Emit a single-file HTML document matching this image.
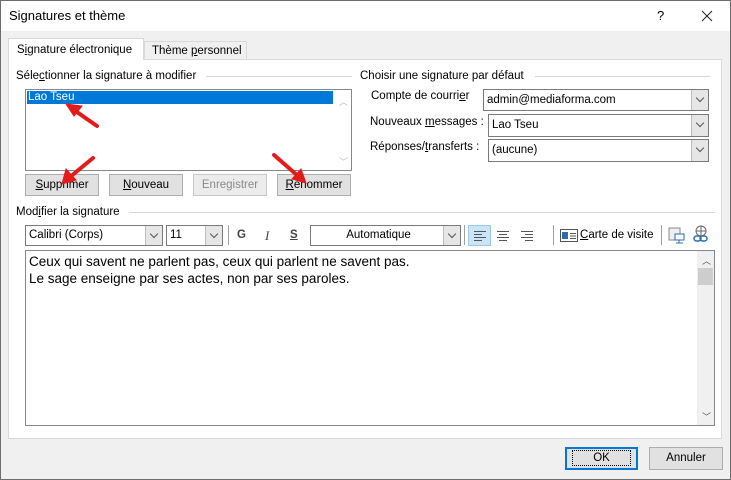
<!DOCTYPE html>
<html><head><meta charset="utf-8"><style>
*{box-sizing:border-box;margin:0;padding:0}
body{width:731px;height:480px;overflow:hidden;font-family:"Liberation Sans",sans-serif;font-size:11.5px;line-height:15px;color:#000;background:#f0f0f0;position:relative}
.a{position:absolute}
.win{left:0;top:0;width:731px;height:480px;border:1px solid #6d6d6d;background:#f0f0f0}
.title{left:1px;top:1px;width:729px;height:30px;background:#fff}
.panel{left:8px;top:59px;width:714px;height:380px;background:#fff;border:1px solid #d9d9d9}
.btn{background:#e1e1e1;border:1px solid #adadad;text-align:center;line-height:20px}
.combo{background:#fff;border:1px solid #7a7a7a;padding-left:3px;line-height:19px}
.dd{position:absolute;right:0;top:0;width:17px;height:100%;background:#e6e6e6;border-left:1px solid #bdbdbd}
.dd:after{content:"";position:absolute;left:5px;top:5px;width:5px;height:5px;border-right:1px solid #555;border-bottom:1px solid #555;transform:rotate(45deg)}
.sep{background:#d6d6d6;height:1px}
.vs{width:1px;background:#a0a0a0;height:20px}
u{text-decoration:underline}
</style></head><body>
<div class="a win"></div>
<div class="a title"></div>
<div class="a" style="left:9px;top:8px;font-size:13px">Signatures et thème</div>
<div class="a" style="left:657px;top:8px;font-size:13px">?</div>
<svg class="a" style="left:701px;top:10px" width="12" height="12"><path d="M1 1L11 11M11 1L1 11" stroke="#222" stroke-width="1"/></svg>
<div class="a panel"></div>
<div class="a" style="left:8px;top:38px;width:136px;height:22px;background:#fff;border:1px solid #d9d9d9;border-bottom:none;padding:4px 0 0 8px">S<u>i</u>gnature électronique</div>
<div class="a" style="left:144px;top:41px;width:103px;height:18px;background:#f0f0f0;border:1px solid #d9d9d9;border-bottom:none;padding:2px 0 0 7px">Thème <u>p</u>ersonnel</div>

<div class="a" style="left:16px;top:69px">Séle<u>c</u>tionner la signature à modifier</div>
<div class="a sep" style="left:206px;top:76px;width:146px"></div>
<div class="a" style="left:25px;top:89px;width:327px;height:82px;border:1px solid #828790;background:#fff"></div>
<div class="a" style="left:27px;top:91px;width:306px;height:13px;background:#0078d7;color:#fff;line-height:13px;padding-left:1px">Lao Tseu</div>
<div class="a" style="left:339px;top:95px;color:#bbb;font-size:9px">︿</div>
<div class="a" style="left:339px;top:155px;color:#bbb;font-size:9px">﹀</div>
<div class="a btn" style="left:25px;top:174px;width:74px;height:22px"><u>S</u>upprimer</div>
<div class="a btn" style="left:109px;top:174px;width:74px;height:22px"><u>N</u>ouveau</div>
<div class="a btn" style="left:193px;top:174px;width:74px;height:22px;color:#8a8a8a;background:#ececec;border-color:#c8c8c8">Enregistrer</div>
<div class="a btn" style="left:277px;top:174px;width:74px;height:22px"><u>R</u>enommer</div>

<div class="a" style="left:360px;top:69px">Choisir une signature par défaut</div>
<div class="a sep" style="left:535px;top:76px;width:175px"></div>
<div class="a" style="left:371px;top:89px">Compte de courri<u>e</u>r</div>
<div class="a combo" style="left:483px;top:89px;width:226px;height:22px;line-height:20px">admin@mediaforma.com<span class="dd"></span></div>
<div class="a" style="left:370px;top:115px">Nouveaux <u>m</u>essages :</div>
<div class="a combo" style="left:488px;top:114px;width:221px;height:23px;line-height:21px">Lao Tseu<span class="dd"></span></div>
<div class="a" style="left:370px;top:140px">Réponses/<u>t</u>ransferts :</div>
<div class="a combo" style="left:488px;top:139px;width:221px;height:23px;line-height:21px">(aucune)<span class="dd"></span></div>

<div class="a" style="left:16px;top:205px">Mod<u>i</u>fier la signature</div>
<div class="a sep" style="left:129px;top:212px;width:586px"></div>
<div class="a combo" style="left:25px;top:225px;width:138px;height:21px">Calibri (Corps)<span class="dd"></span></div>
<div class="a combo" style="left:166px;top:225px;width:57px;height:21px">11<span class="dd"></span></div>
<div class="a vs" style="left:228px;top:225px"></div>
<div class="a" style="left:237px;top:228px;font-weight:bold;color:#444">G</div>
<div class="a" style="left:265px;top:228px;font-style:italic;font-family:'Liberation Serif',serif;font-size:13px;color:#444">I</div>
<div class="a" style="left:290px;top:228px;font-weight:bold;color:#444;text-decoration:underline">S</div>
<div class="a combo" style="left:310px;top:225px;width:151px;height:21px;text-align:center;padding-right:17px">Automatique<span class="dd"></span></div>
<div class="a vs" style="left:464px;top:225px"></div>
<div class="a" style="left:468px;top:225px;width:23px;height:21px;background:#cce4f7;border:1px solid #99c9ef"></div>
<svg class="a" style="left:468px;top:225px" width="80" height="21"><g stroke="#555" stroke-width="1"><path d="M6 6.5h12M6 9.5h8M6 12.5h12M6 15.5h8"/><path d="M29 6.5h12M31 9.5h8M29 12.5h12M31 15.5h8"/><path d="M53 6.5h12M57 9.5h8M53 12.5h12M57 15.5h8"/></g></svg>
<div class="a vs" style="left:553px;top:225px"></div>
<svg class="a" style="left:560px;top:229px" width="18" height="13"><rect x="0.5" y="0.5" width="17" height="12" fill="#fff" stroke="#555"/><rect x="2" y="3" width="6" height="7" fill="#2b6cb0"/><path d="M10 4.5h6M10 7h6M10 9.5h6" stroke="#555"/></svg>
<div class="a" style="left:580px;top:228px"><u>C</u>arte de visite</div>
<div class="a vs" style="left:661px;top:225px"></div>
<svg class="a" style="left:668px;top:226px" width="18" height="18"><rect x="1" y="2" width="11" height="12" fill="#eee" stroke="#888"/><rect x="7" y="8" width="9" height="6" fill="#fff" stroke="#2b6cb0"/><path d="M11 14v3M8 17h7" stroke="#2b6cb0"/></svg>
<svg class="a" style="left:692px;top:225px" width="18" height="20"><circle cx="9" cy="6" r="5" fill="none" stroke="#666"/><path d="M4 6h10M9 1v10" stroke="#666"/><rect x="2" y="11" width="7" height="5" rx="2.5" fill="none" stroke="#2b6cb0" stroke-width="1.5"/><rect x="8" y="11" width="7" height="5" rx="2.5" fill="none" stroke="#2b6cb0" stroke-width="1.5"/></svg>

<div class="a" style="left:25px;top:250px;width:690px;height:176px;border:1px solid #828790;background:#fff"></div>
<div class="a" style="left:29px;top:253px;font-size:13.5px;line-height:17px">Ceux qui savent ne parlent pas, ceux qui parlent ne savent pas.<br>Le sage enseigne par ses actes, non par ses paroles.</div>
<div class="a" style="left:697px;top:251px;width:17px;height:174px;background:#f0f0f0"></div>
<div class="a" style="left:698px;top:268px;width:15px;height:17px;background:#cdcdcd"></div>
<div class="a" style="left:702px;top:254px;font-size:9px;color:#555">︿</div>
<div class="a" style="left:702px;top:410px;font-size:9px;color:#555">﹀</div>

<div class="a" style="left:565px;top:447px;width:73px;height:23px;border:2px solid #0078d7;background:#e1e1e1;text-align:center;line-height:19px"><span style="border:1px dotted #000;padding:1px 20px">OK</span></div>
<div class="a btn" style="left:649px;top:447px;width:74px;height:23px;line-height:21px">Annuler</div>

<svg class="a" style="left:0;top:0" width="731" height="480"><g fill="#e31b1b" stroke="#e31b1b" stroke-linecap="round">
<line x1="97" y1="126" x2="74" y2="110" stroke-width="4"/><polygon points="66,104 82,106 74,116"/>
<line x1="93" y1="158" x2="70" y2="177" stroke-width="4"/><polygon points="62,184 66,169 76,180"/>
<line x1="274" y1="155" x2="298" y2="176" stroke-width="4"/><polygon points="306,183 292,179 301,169"/>
</g></svg>
</body></html>
